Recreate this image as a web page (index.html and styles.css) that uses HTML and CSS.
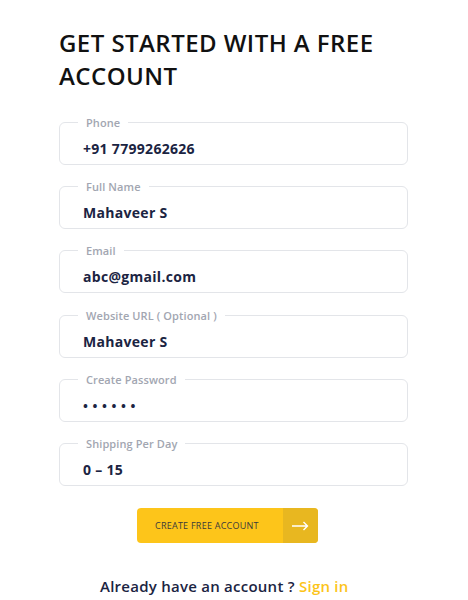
FILE: index.html
```html
<!DOCTYPE html>
<html lang="en">
<head>
<meta charset="utf-8">
<title>Get started</title>
<link rel="stylesheet" href="styles.css">
</head>
<body>
<main class="page">
  <h1 class="title">GET STARTED WITH A FREE ACCOUNT</h1>
  <form class="form">
    <fieldset class="field"><legend class="label">Phone</legend><div class="value">+91 7799262626</div></fieldset>
    <fieldset class="field"><legend class="label">Full Name</legend><div class="value">Mahaveer S</div></fieldset>
    <fieldset class="field"><legend class="label">Email</legend><div class="value">abc@gmail.com</div></fieldset>
    <fieldset class="field"><legend class="label">Website URL ( Optional )</legend><div class="value">Mahaveer S</div></fieldset>
    <fieldset class="field"><legend class="label">Create Password</legend><div class="value dots">••••••</div></fieldset>
    <fieldset class="field"><legend class="label">Shipping Per Day</legend><div class="value">0 – 15</div></fieldset>
    <button type="button" class="btn">
      <span class="btn-text">CREATE FREE ACCOUNT</span>
      <span class="btn-arrow"><svg width="17" height="10" viewBox="0 0 17 10"><path d="M0 5H15.5M11.5 1L15.5 5L11.5 9" fill="none" stroke="#fff" stroke-width="1.4"/></svg></span>
    </button>
  </form>
  <p class="signin">Already have an account ? <a class="link">Sign in</a></p>
</main>
</body>
</html>
```
FILE: styles.css
```css
* { box-sizing: border-box; }
body { margin: 0; background: #fff; }
.page { width: 468px; padding: 26px 0 0 59px; }
.title {
  margin: 0;
  width: 345px;
  font-family: "Open Sans", sans-serif;
  font-weight: 600;
  font-size: 24px;
  line-height: 33px;
  color: #111;
  letter-spacing: 0.45px;
}
.form { display: flex; flex-direction: column; gap: 15.4px; margin-top: 23.5px; width: 349px; }
.field {
  margin: 0;
  border: 1px solid #e3e5e9;
  border-radius: 6px;
  padding: 11px 0 6px 23px;
  min-width: 0;
}
.label {
  margin-left: -5px;
  padding: 0 8px;
  font-family: "Open Sans", sans-serif;
  font-weight: 600;
  font-size: 11px;
  line-height: 13px;
  color: #a2a6b1;
  letter-spacing: 0.1px;
}
.value {
  font-family: "Open Sans", sans-serif;
  font-weight: 700;
  font-size: 14px;
  line-height: 18px;
  color: #1b2442;
  letter-spacing: 0.3px;
}
.dots { letter-spacing: 4.6px; font-size: 13px; }
.btn {
  margin: 6.5px 0 0 78px;
  width: 181px;
  height: 35px;
  display: flex;
  padding: 0;
  border: 0;
  border-radius: 4px;
  overflow: hidden;
  background: #fdc51a;
  cursor: pointer;
}
.btn-text {
  flex: 1;
  display: flex;
  align-items: center;
  padding-left: 18px;
  font-family: "Open Sans", sans-serif;
  font-size: 9px;
  letter-spacing: 0.25px;
  color: #3a3a3a;
}
.btn-arrow {
  width: 35px;
  display: flex;
  align-items: center;
  justify-content: center;
  background: #e8b720;
}
.signin {
  margin: 33px 0 0 41px;
  font-family: "Open Sans", sans-serif;
  font-weight: 600;
  font-size: 15px;
  line-height: 20px;
  color: #1b2442;
  letter-spacing: 0.25px;
}
.link { color: #fcc419; }
```
